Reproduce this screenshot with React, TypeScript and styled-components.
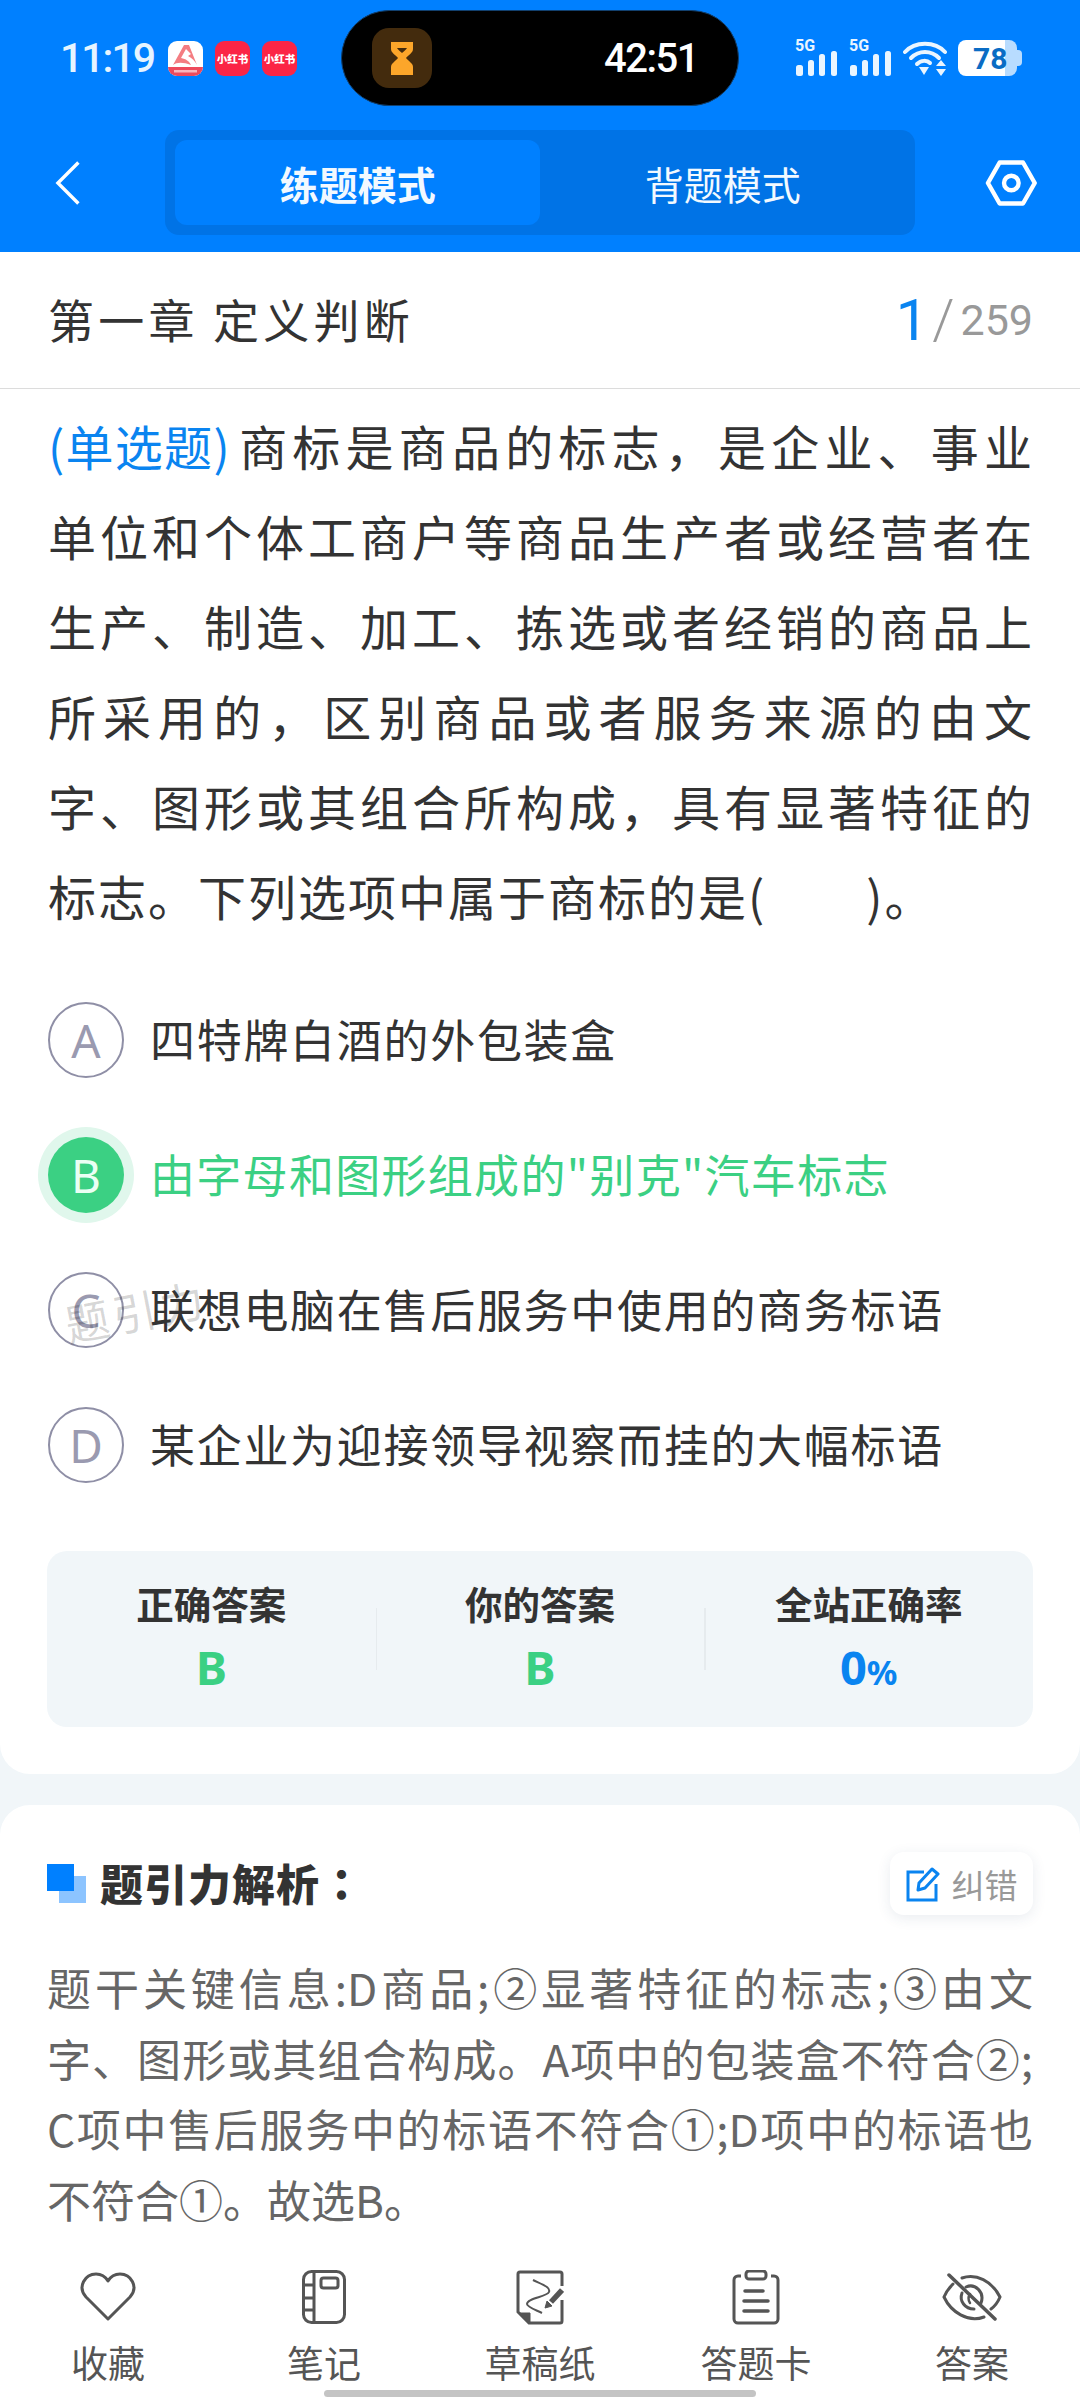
import { createGlobalStyle, styled } from 'styled-components';

const GlobalStyle = createGlobalStyle`
  html, body {
    margin: 0;
    padding: 0;
    background: #f1f6f9;
  }
  body {
    font-family: 'Noto Sans CJK SC', 'Noto Sans', sans-serif;
  }
  * {
    box-sizing: border-box;
  }
`;

const questionLines = [
  '商标是商品的标志，是企业、事业',
  '单位和个体工商户等商品生产者或经营者在',
  '生产、制造、加工、拣选或者经销的商品上',
  '所采用的，区别商品或者服务来源的由文',
  '字、图形或其组合所构成，具有显著特征的',
];

const analysisLines = [
  '题干关键信息:D商品;②显著特征的标志;③由文',
  '字、图形或其组合构成。A项中的包装盒不符合②;',
  'C项中售后服务中的标语不符合①;D项中的标语也',
];

const options = [
  { key: 'A', text: '四特牌白酒的外包装盒' },
  { key: 'B', text: '由字母和图形组成的"别克"汽车标志', correct: true },
  { key: 'C', text: '联想电脑在售后服务中使用的商务标语' },
  { key: 'D', text: '某企业为迎接领导视察而挂的大幅标语' },
];

const SignalIcon = () => (
  <Signal>
    <SignalBadge>5G</SignalBadge>
    <svg width="43" height="36" viewBox="0 0 43 36">
      <rect x="1" y="25" width="7" height="11" rx="2.5" fill="#eaf5ff" />
      <rect x="13" y="20" width="6" height="16" rx="2.5" fill="#eaf5ff" />
      <rect x="24" y="14" width="6" height="22" rx="2.5" fill="#eaf5ff" />
      <rect x="36" y="11" width="6" height="25" rx="2.5" fill="#eaf5ff" />
    </svg>
  </Signal>
);

const WifiIcon = () => (
  <svg width="44" height="36" viewBox="0 0 44 36">
    <g fill="none" stroke="#eaf5ff" strokeWidth="4" strokeLinecap="round">
      <path d="M2 12C12 1 32 1 42 12" />
      <path d="M8 18C16 10 28 10 36 18" />
      <path d="M14 24C18 20 24 20 27 23" />
    </g>
    <path d="M16 27h10l-5 8z" fill="#eaf5ff" />
    <path d="M38 20l5 6h-10zM38 36l5-7h-10z" fill="#eaf5ff" />
  </svg>
);

const BackIcon = () => (
  <svg width="26" height="46" viewBox="0 0 26 46" fill="none">
    <path d="M24 2L3 23l21 21" stroke="#fff" strokeWidth="3.5" />
  </svg>
);

const SettingIcon = () => (
  <svg width="54" height="48" viewBox="0 0 54 48" fill="none">
    <path d="M15 3h24l12 21-12 21H15L3 24z" stroke="#fff" strokeWidth="4.5" strokeLinejoin="round" />
    <circle cx="27" cy="24" r="7.5" stroke="#fff" strokeWidth="4.5" />
  </svg>
);

const HourglassIcon = () => (
  <svg width="24" height="34" viewBox="0 0 24 34">
    <path
      d="M1 1h22v7c0 4-5 6-7 9 2 3 7 5 7 9v8H1v-8c0-4 5-6 7-9-2-3-7-5-7-9z"
      fill="#fca62a"
    />
    <path d="M7 7h10c-1 2-3 3-5 5-2-2-4-3-5-5z" fill="#432b0d" />
  </svg>
);

const LogoIcon = () => (
  <svg width="35" height="35" viewBox="0 0 35 35">
    <rect width="35" height="35" rx="9" fill="#fff" />
    <path d="M5 24L16 4h5l8 20c-2-4-5-7-9-9l3-2-5-5-5 9c5 1 8 3 10 7-8-3-14-3-18 0z" fill="#f47d82" />
    <path d="M0 26h35v0a9 9 0 0 1-9 9H9a9 9 0 0 1-9-9z" fill="#ee4a5c" />
    <rect x="6" y="29" width="23" height="2.5" fill="#f9b4ba" />
  </svg>
);

const EditIcon = () => (
  <svg width="34" height="36" viewBox="0 0 34 36" fill="none">
    <path d="M18 6H2v28h28V18" stroke="#0a84f0" strokeWidth="3" />
    <path d="M12 24l1-7L26 3l6 5-13 14z" stroke="#0a84f0" strokeWidth="3" strokeLinejoin="round" />
  </svg>
);

const HeartIcon = () => (
  <svg width="56" height="50" viewBox="0 0 56 50" fill="none">
    <path
      d="M28 47L6 25C-3 15 5 2 16 2c5 0 9 2 12 7 3-5 7-7 12-7 11 0 19 13 10 23z"
      stroke="#555"
      strokeWidth="3"
      strokeLinejoin="round"
    />
  </svg>
);

const NoteIcon = () => (
  <svg width="44" height="54" viewBox="0 0 44 54" fill="none" stroke="#555" strokeWidth="3">
    <rect x="1.5" y="1.5" width="41" height="51" rx="8" />
    <path d="M12 2v50M2 15h10M2 28h10M2 40h10" />
    <rect x="19" y="8" width="17" height="10" rx="2.5" />
  </svg>
);

const DraftIcon = () => (
  <svg width="48" height="55" viewBox="0 0 48 55" fill="none" stroke="#555" strokeWidth="3">
    <path d="M46 16V4a2 2 0 0 0-2-2H4a2 2 0 0 0-2 2v38l11 11h31a2 2 0 0 0 2-2V30" />
    <path d="M3 43h11v10z" fill="#555" strokeWidth="1" />
    <path d="M17 10C25 14 35 17 33 22 31 27 11 28 11 34c0 3 9 6 15 9" strokeWidth="2" />
    <path d="M35 32l11-12" strokeWidth="5.5" />
    <path d="M29 38l2-7 5 5z" fill="#555" strokeWidth="1" />
  </svg>
);

const CardIcon = () => (
  <svg width="48" height="55" viewBox="0 0 48 55" fill="none" stroke="#555" strokeWidth="3">
    <path d="M9 6H6a4 4 0 0 0-4 4v39a4 4 0 0 0 4 4h36a4 4 0 0 0 4-4V10a4 4 0 0 0-4-4h-3" />
    <rect x="14" y="1" width="20" height="8" rx="3" />
    <path d="M13 21h18M12 31h24M12 41h24" strokeWidth="3.5" strokeLinecap="round" />
  </svg>
);

const EyeOffIcon = () => (
  <svg width="60" height="50" viewBox="0 0 60 50" fill="none" stroke="#555" strokeWidth="3" strokeLinecap="round">
    <path d="M7 3l46 44" strokeWidth="3.5" />
    <path d="M20 6C34 1 50 9 58 25 56 30 53 34 49 37" />
    <path d="M11 12C7 16 4 20 2 25 9 40 26 51 42 45" />
    <path d="M24 15C33 11 43 20 39 31" />
    <path d="M20 21C17 29 23 37 32 37" />
    <path d="M28 22C26 25 26 28 28 31" strokeWidth="2.5" />
  </svg>
);

const navItems = [
  { label: '收藏', icon: <HeartIcon /> },
  { label: '笔记', icon: <NoteIcon /> },
  { label: '草稿纸', icon: <DraftIcon /> },
  { label: '答题卡', icon: <CardIcon /> },
  { label: '答案', icon: <EyeOffIcon /> },
];

const App = () => (
  <Page>
    <GlobalStyle />
    <Header>
      <StatusBar>
        <StatusLeft>
          <Time>11:19</Time>
          <AppIcons>
            <LogoIcon />
            <RedBook>小红书</RedBook>
            <RedBook>小红书</RedBook>
          </AppIcons>
        </StatusLeft>
        <Island>
          <HourglassBox>
            <HourglassIcon />
          </HourglassBox>
          <IslandTime>42:51</IslandTime>
        </Island>
        <StatusRight>
          <SignalIcon />
          <SignalIcon />
          <WifiIcon />
          <Battery>
            <BatteryBody>
              <BatteryText>78</BatteryText>
            </BatteryBody>
            <BatteryTip />
          </Battery>
        </StatusRight>
      </StatusBar>
      <NavBar>
        <BackIcon />
        <Tabs>
          <Tab $active>练题模式</Tab>
          <Tab>背题模式</Tab>
        </Tabs>
        <SettingIcon />
      </NavBar>
    </Header>

    <QuestionCard>
      <TitleRow>
        <ChapterTitle>第一章 定义判断</ChapterTitle>
        <Counter>
          <CounterCurrent>1</CounterCurrent>
          <CounterSlash>/</CounterSlash>
          <CounterTotal>259</CounterTotal>
        </Counter>
      </TitleRow>
      <QuestionBody>
        {questionLines.map((line, i) => (
          <QuestionLine key={line}>
            {i === 0 && <QuestionType>(单选题)</QuestionType>}
            {line}
          </QuestionLine>
        ))}
        <LastQuestionLine>
          标志。下列选项中属于商标的是(<Blank />)。
        </LastQuestionLine>
      </QuestionBody>
      <OptionList>
        {options.map((option) => (
          <OptionRow key={option.key}>
            <OptionBadge $correct={option.correct}>{option.key}</OptionBadge>
            <OptionText $correct={option.correct}>{option.text}</OptionText>
            {option.key === 'C' && <Watermark>题引力</Watermark>}
          </OptionRow>
        ))}
      </OptionList>
      <Stats>
        <StatColumn>
          <StatLabel>正确答案</StatLabel>
          <StatValue>B</StatValue>
        </StatColumn>
        <StatColumn $divided>
          <StatLabel>你的答案</StatLabel>
          <StatValue>B</StatValue>
        </StatColumn>
        <StatColumn $divided>
          <StatLabel>全站正确率</StatLabel>
          <StatValue $blue>
            0<StatUnit>%</StatUnit>
          </StatValue>
        </StatColumn>
      </Stats>
    </QuestionCard>

    <AnalysisCard>
      <AnalysisHeader>
        <AnalysisMark>
          <MarkBack />
          <MarkFront />
        </AnalysisMark>
        <AnalysisTitle>
          题引力解析<AnalysisColon>：</AnalysisColon>
        </AnalysisTitle>
        <ReportButton>
          <EditIcon />
          纠错
        </ReportButton>
      </AnalysisHeader>
      <AnalysisBody>
        {analysisLines.map((line) => (
          <AnalysisLine key={line}>{line}</AnalysisLine>
        ))}
        <AnalysisLastLine>不符合①。故选B。</AnalysisLastLine>
      </AnalysisBody>
    </AnalysisCard>

    <BottomNav>
      <NavItems>
        {navItems.map((item) => (
          <NavItem key={item.label}>
            <NavIcon>{item.icon}</NavIcon>
            <NavLabel>{item.label}</NavLabel>
          </NavItem>
        ))}
      </NavItems>
      <HomeIndicator />
    </BottomNav>
  </Page>
);

const Page = styled.div`
  width: 1080px;
  height: 2400px;
  overflow: hidden;
  position: relative;
  background: #f1f6f9;
`;

const Header = styled.div`
  background: #0080ff;
  height: 252px;
  padding-top: 10px;
`;

const StatusBar = styled.div`
  height: 96px;
  display: flex;
  align-items: center;
  padding-left: 60px;
`;

const StatusLeft = styled.div`
  width: 281px;
  display: flex;
  align-items: center;
`;

const Time = styled.span`
  width: 108px;
  font-family: Roboto, sans-serif;
  font-size: 41px;
  font-weight: 500;
  line-height: 1;
  letter-spacing: -2px;
  color: #e6f4ff;
`;

const AppIcons = styled.div`
  display: flex;
  gap: 12px;
`;

const RedBook = styled.div`
  width: 35px;
  height: 35px;
  border-radius: 9px;
  background: #fb2546;
  color: #fff;
  font-size: 10.5px;
  font-weight: 900;
  display: flex;
  align-items: center;
  justify-content: center;
  white-space: nowrap;
`;

const Island = styled.div`
  width: 398px;
  height: 96px;
  background: #000;
  border: 1.5px solid #12406e;
  border-radius: 48px;
  display: flex;
  align-items: center;
  justify-content: space-between;
  padding: 0 40px 0 30px;
`;

const HourglassBox = styled.div`
  width: 60px;
  height: 60px;
  border-radius: 17px;
  background: #432b0d;
  display: flex;
  align-items: center;
  justify-content: center;
`;

const IslandTime = styled.span`
  font-family: Roboto, sans-serif;
  font-size: 40px;
  font-weight: 500;
  letter-spacing: -1.5px;
  color: #fff;
`;

const StatusRight = styled.div`
  margin-left: 56px;
  display: flex;
  align-items: center;
  gap: 11px;
`;

const Signal = styled.div`
  position: relative;
  width: 43px;
  height: 36px;
`;

const SignalBadge = styled.span`
  position: absolute;
  left: 0;
  top: 0;
  font-family: Roboto, sans-serif;
  font-size: 16px;
  font-weight: 700;
  line-height: 12px;
  color: #eaf5ff;
`;

const Battery = styled.div`
  display: flex;
  align-items: center;
`;

const BatteryBody = styled.div`
  width: 59px;
  height: 36px;
  border-radius: 8px;
  background: linear-gradient(to right, #fff 47px, #b8dcff 47px);
  padding-left: 15px;
  display: flex;
  align-items: center;
`;

const BatteryText = styled.span`
  font-family: Roboto, sans-serif;
  font-size: 30px;
  font-weight: 700;
  color: #0a6cc4;
`;

const BatteryTip = styled.div`
  width: 5px;
  height: 16px;
  border-radius: 0 4px 4px 0;
  background: #b8dcff;
`;

const NavBar = styled.div`
  height: 146px;
  display: flex;
  align-items: center;
  padding: 7px 42px 0 55px;
`;

const Tabs = styled.div`
  width: 750px;
  height: 105px;
  margin: 0 70px 0 85px;
  background: #0073e6;
  border-radius: 14px;
  padding: 10px;
  display: flex;
  flex-shrink: 0;
`;

const Tab = styled.div<{ $active?: boolean }>`
  flex: 1;
  border-radius: 12px;
  background: ${(p) => (p.$active ? '#0080ff' : 'transparent')};
  color: #f2f9ff;
  font-size: 39px;
  font-weight: ${(p) => (p.$active ? 700 : 400)};
  display: flex;
  align-items: center;
  justify-content: center;
`;

const QuestionCard = styled.div`
  background: #fff;
  height: 1522px;
  border-radius: 0 0 30px 30px;
`;

const TitleRow = styled.div`
  height: 137px;
  border-bottom: 1.5px solid #dcdcdc;
  display: flex;
  align-items: center;
  justify-content: space-between;
  padding: 0 47px 4px 48px;
`;

const ChapterTitle = styled.div`
  font-size: 46px;
  color: #333;
  letter-spacing: 4.2px;
`;

const Counter = styled.div`
  margin-top: 3px;
  font-family: Roboto, sans-serif;
  color: #999;
  display: flex;
  align-items: center;
`;

const CounterCurrent = styled.span`
  font-size: 58px;
  color: #0a84f0;
`;

const CounterSlash = styled.span`
  font-size: 56px;
  font-weight: 300;
  margin: 0 6px 0 4px;
`;

const CounterTotal = styled.span`
  font-size: 43px;
`;

const QuestionBody = styled.div`
  padding: 11px 48px 0;
`;

const QuestionLine = styled.div`
  height: 90px;
  font-size: 48px;
  line-height: 90px;
  color: #333;
  text-align: justify;
  text-align-last: justify;
  white-space: nowrap;
`;

const LastQuestionLine = styled(QuestionLine)`
  text-align-last: left;
  letter-spacing: 2px;
`;

const QuestionType = styled.span`
  display: inline-block;
  margin-right: 3px;
  letter-spacing: 1.3px;
  color: #0a84f0;
`;

const Blank = styled.span`
  display: inline-block;
  width: 100px;
`;

const OptionList = styled.div`
  padding: 0 48px;
  margin-top: 62px;
  display: flex;
  flex-direction: column;
  gap: 59px;
`;

const OptionRow = styled.div`
  position: relative;
  height: 76px;
  display: flex;
  align-items: center;
  gap: 26px;
`;

const OptionBadge = styled.div<{ $correct?: boolean }>`
  width: 76px;
  height: 76px;
  flex-shrink: 0;
  border-radius: 50%;
  border: ${(p) => (p.$correct ? 'none' : '2.5px solid #8f8fa6')};
  background: ${(p) => (p.$correct ? '#3bd083' : 'transparent')};
  box-shadow: ${(p) => (p.$correct ? '0 0 0 10px #e0f7ec' : 'none')};
  color: ${(p) => (p.$correct ? '#eafff4' : '#9a9ab0')};
  font-family: 'Noto Sans', sans-serif;
  font-size: 46px;
  display: flex;
  align-items: center;
  justify-content: center;
`;

const OptionText = styled.div<{ $correct?: boolean }>`
  position: relative;
  z-index: 1;
  padding-bottom: 4px;
  font-size: 45px;
  letter-spacing: ${(p) => (p.$correct ? '1.3px' : '1.7px')};
  color: ${(p) => (p.$correct ? '#3bd083' : '#333')};
  white-space: nowrap;
`;

const Watermark = styled.span`
  position: absolute;
  left: 16px;
  top: 6px;
  font-size: 44px;
  color: rgba(0, 0, 0, 0.17);
  letter-spacing: 4px;
  transform: rotate(-11deg);
`;

const Stats = styled.div`
  margin: 68px 47px 0;
  height: 176px;
  background: #f1f6f9;
  border-radius: 20px;
  display: grid;
  grid-template-columns: repeat(3, 1fr);
  padding-top: 28px;
`;

const StatColumn = styled.div<{ $divided?: boolean }>`
  position: relative;
  display: flex;
  flex-direction: column;
  align-items: center;
  gap: 11px;

  &::before {
    content: '';
    display: ${(p) => (p.$divided ? 'block' : 'none')};
    position: absolute;
    left: 0;
    top: 29px;
    height: 62px;
    width: 1.5px;
    background: #e6ebee;
  }
`;

const StatLabel = styled.div`
  font-size: 37.5px;
  line-height: 48px;
  font-weight: 700;
  color: #333;
`;

const StatValue = styled.div<{ $blue?: boolean }>`
  font-family: 'Noto Sans', sans-serif;
  font-size: 47px;
  line-height: 58px;
  font-weight: 700;
  color: ${(p) => (p.$blue ? '#0a84f0' : '#3bd083')};
`;

const StatUnit = styled.span`
  font-size: 34px;
`;

const AnalysisCard = styled.div`
  margin-top: 31px;
  background: #fff;
  height: 600px;
  border-radius: 30px 30px 0 0;
  padding: 47px 47px 0;
`;

const AnalysisHeader = styled.div`
  display: flex;
  align-items: center;
  height: 63px;
`;

const AnalysisMark = styled.div`
  position: relative;
  width: 39px;
  height: 39px;
  margin-right: 14px;
`;

const MarkBack = styled.div`
  position: absolute;
  right: 0;
  bottom: 0;
  width: 27px;
  height: 27px;
  background: #8cc4ff;
`;

const MarkFront = styled.div`
  position: absolute;
  left: 0;
  top: 0;
  width: 27px;
  height: 27px;
  background: #0080ff;
`;

const AnalysisTitle = styled.div`
  flex: 1;
  padding-bottom: 4px;
  font-size: 43px;
  font-weight: 900;
  color: #333;
  letter-spacing: 1px;
`;

const AnalysisColon = styled.span`
  font-family: 'Noto Sans CJK TC', sans-serif;
`;

const ReportButton = styled.div`
  width: 143px;
  height: 63px;
  background: #fff;
  border-radius: 14px;
  box-shadow: 0 3px 14px rgba(40, 70, 110, 0.1);
  display: flex;
  align-items: center;
  justify-content: center;
  gap: 12px;
  font-size: 33px;
  color: #999;
`;

const AnalysisBody = styled.div`
  margin-top: 37px;
`;

const AnalysisLine = styled.div`
  height: 70.5px;
  line-height: 70.5px;
  font-size: 44px;
  color: #666;
  text-align: justify;
  text-align-last: justify;
  white-space: nowrap;
`;

const AnalysisLastLine = styled(AnalysisLine)`
  text-align-last: left;
`;

const BottomNav = styled.div`
  position: absolute;
  left: 0;
  right: 0;
  bottom: 0;
  height: 152px;
  background: #fff;
`;

const NavItems = styled.div`
  display: flex;
  justify-content: space-between;
`;

const NavItem = styled.div`
  width: 216px;
  display: flex;
  flex-direction: column;
  align-items: center;
  padding-top: 20px;
`;

const NavIcon = styled.div`
  height: 58px;
  display: flex;
  align-items: center;
  justify-content: center;
`;

const NavLabel = styled.div`
  margin-top: 13px;
  font-size: 37px;
  line-height: 46px;
  color: #555;
`;

const HomeIndicator = styled.div`
  position: absolute;
  left: 324px;
  bottom: 3px;
  width: 432px;
  height: 7px;
  border-radius: 4px;
  background: #c4c4c4;
`;

export default App;
